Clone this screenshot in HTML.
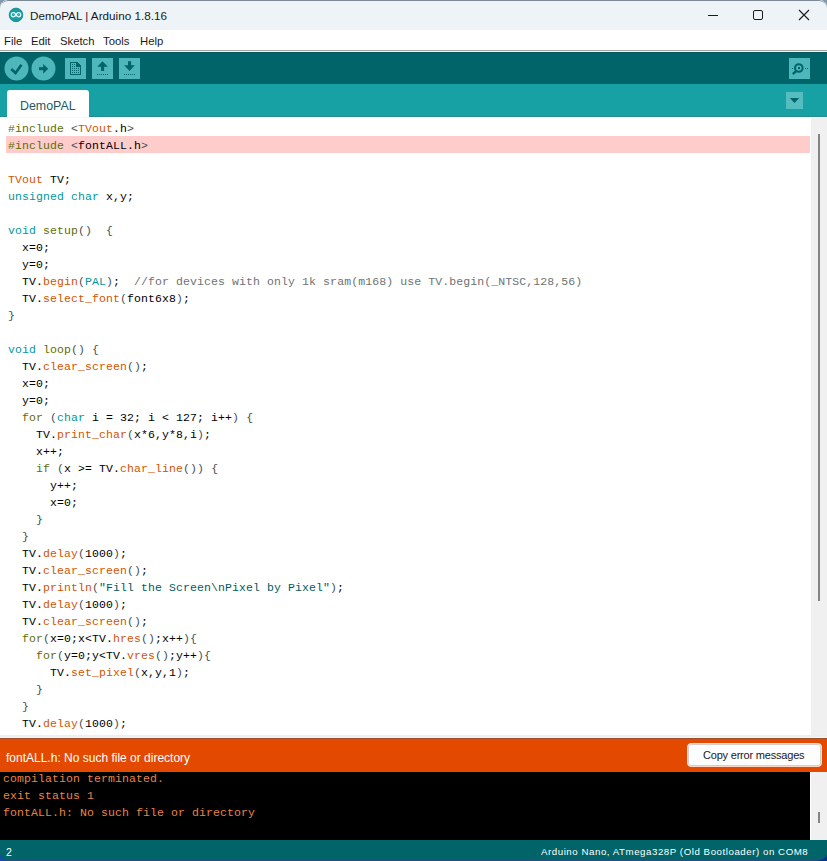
<!DOCTYPE html>
<html><head><meta charset="utf-8">
<style>
html,body{margin:0;padding:0;}
body{width:827px;height:861px;overflow:hidden;position:relative;background:#7f9aab;font-family:"Liberation Sans",sans-serif;}
.abs{position:absolute;}
#win{position:absolute;left:0;top:0;width:827px;height:861px;overflow:hidden;border-radius:8px 8px 0 0;background:#fff;}
#title{left:0;top:0;width:827px;height:30px;background:#eef3f8;}
#menu{left:0;top:30px;width:827px;height:20px;background:#fff;}
#mline{left:0;top:50px;width:827px;height:1px;background:#a9a5a5;}
#tool{left:0;top:51px;width:827px;height:33px;background:#006468;}
#tabs{left:0;top:84px;width:827px;height:33px;background:#17a1a5;}
#editor{left:0;top:117px;width:827px;height:618px;background:#fff;}
#vsb{left:811px;top:117px;width:16px;height:618px;background:#f0f0f0;}
#band{left:0;top:735px;width:827px;height:3px;background:#e8ebee;}
#status{left:0;top:738px;width:827px;height:34px;background:#e34c00;}
#console{left:0;top:772px;width:810px;height:68px;background:#000;}
#csb{left:810px;top:772px;width:17px;height:68px;background:#f0f0f0;border-left:1px solid #fff;box-sizing:border-box;}
#foot{left:0;top:840px;width:827px;height:20px;background:#006468;}
#bline{left:0;top:860px;width:827px;height:1px;background:#1f3f8f;}
pre{margin:0;font-family:"Liberation Mono",monospace;font-size:11.5px;letter-spacing:0.1px;line-height:17px;}
#code{left:8px;top:120px;color:#000;}
.hl{position:absolute;left:6px;top:136px;width:804px;height:17px;background:#ffcccc;}
.menu{top:35px;font-size:11.3px;color:#1a1a1a;white-space:pre}
.p{color:#5e6d03}.k{color:#00979c}.f{color:#d35400}.c{color:#6e7273}.s{color:#005c5f}.o{color:#434f54}.r{color:#728e00}
</style></head><body>
<div id="win">
  <div id="title" class="abs"></div>
  <svg class="abs" style="left:0;top:0" width="30" height="30" viewBox="0 0 30 30"><circle cx="16" cy="14.9" r="6.8" fill="#1a9da1" stroke="#0f8589" stroke-width="0.8"/><circle cx="13.4" cy="14.8" r="2.1" fill="none" stroke="#dffcfc" stroke-width="1.3"/><circle cx="18.6" cy="14.8" r="2.1" fill="none" stroke="#dffcfc" stroke-width="1.3"/><path d="M12.6 14.8H14.2M17.8 14.8H19.4M18.6 14V15.6" stroke="#4fb5b8" stroke-width="0.6"/></svg>
  <div class="abs" style="left:0;top:0;width:827px;height:20px;box-sizing:border-box;border-top:1px solid #7c8894;border-radius:8px 8px 0 0"></div>
  <div class="abs" style="left:30px;top:9px;font-size:11.7px;color:#1a1a1a;white-space:pre">DemoPAL | Arduino 1.8.16</div>
  <div class="abs" style="left:708px;top:15px;width:10px;height:1px;background:#1a1a1a"></div>
  <div class="abs" style="left:753px;top:10px;width:10px;height:10px;border:1px solid #1a1a1a;border-radius:2px;box-sizing:border-box"></div>
  <svg class="abs" style="left:798px;top:9px" width="12" height="12" viewBox="0 0 12 12"><path d="M1 1L11 11M11 1L1 11" stroke="#1a1a1a" stroke-width="1.1"/></svg>
  <div id="menu" class="abs"></div>
  <div class="abs menu" style="left:4px">File</div>
  <div class="abs menu" style="left:31px">Edit</div>
  <div class="abs menu" style="left:60px">Sketch</div>
  <div class="abs menu" style="left:103px">Tools</div>
  <div class="abs menu" style="left:140px">Help</div>
  <div id="mline" class="abs"></div>
  <div id="tool" class="abs"></div>
  <div class="abs" style="left:0;top:51px;width:827px;height:1px;background:#e6f8f8"></div>
  <div class="abs" style="left:0;top:52px;width:827px;height:1px;background:#03585c"></div>
  <div id="tabs" class="abs"></div>
  <svg class="abs" style="left:0;top:51px" width="827" height="66" viewBox="0 51 827 66">
    <circle cx="16.5" cy="68.5" r="12" fill="#4db7bb"/>
    <path d="M11.2 69 L15.6 73 L21.4 64.7" fill="none" stroke="#006468" stroke-width="2.6"/>
    <circle cx="43.5" cy="68.5" r="12" fill="#4db7bb"/>
    <rect x="39" y="67.2" width="5" height="3" fill="#006468"/>
    <path d="M43.2 64 L48.2 68.8 L43.2 73.8Z" fill="#006468"/>
    <rect x="65" y="58" width="21" height="21" fill="#4db7bb"/>
    <rect x="92" y="58" width="21" height="21" fill="#4db7bb"/>
    <rect x="119" y="58" width="21" height="21" fill="#4db7bb"/>
    <rect x="789" y="58" width="21" height="21" fill="#4db7bb"/>
    <rect x="786" y="92" width="17" height="17" fill="#55bcbf"/>
    <path d="M789.8 98 L799.2 98 L794.5 103Z" fill="#006468"/>
    <g fill="#006468" shape-rendering="crispEdges">
      <path d="M70 62H77L81 66V75H70Z M71 63V74H80V67H76V63Z" fill-rule="evenodd"/>
      <rect x="72" y="64" width="1" height="1"/><rect x="74" y="64" width="1" height="1"/>
      <rect x="72" y="66" width="1" height="1"/><rect x="74" y="66" width="1" height="1"/>
      <rect x="72" y="68" width="1" height="1"/><rect x="74" y="68" width="1" height="1"/><rect x="76" y="68" width="1" height="1"/><rect x="78" y="68" width="1" height="1"/>
      <rect x="72" y="70" width="1" height="1"/><rect x="74" y="70" width="1" height="1"/><rect x="76" y="70" width="1" height="1"/><rect x="78" y="70" width="1" height="1"/>
      <rect x="72" y="72" width="1" height="1"/><rect x="74" y="72" width="1" height="1"/><rect x="76" y="72" width="1" height="1"/><rect x="78" y="72" width="1" height="1"/>
      <rect x="97" y="74" width="1" height="1"/><rect x="99" y="74" width="1" height="1"/><rect x="101" y="74" width="1" height="1"/><rect x="103" y="74" width="1" height="1"/><rect x="105" y="74" width="1" height="1"/><rect x="107" y="74" width="1" height="1"/>
      <rect x="124" y="74" width="1" height="1"/><rect x="126" y="74" width="1" height="1"/><rect x="128" y="74" width="1" height="1"/><rect x="130" y="74" width="1" height="1"/><rect x="132" y="74" width="1" height="1"/><rect x="134" y="74" width="1" height="1"/>
    </g>
    <path d="M76 62L81 67H76Z" fill="#006468"/>
    <path d="M102.5 61.3L107.8 66.7H104.1V71H101.1V66.7H97.3Z" fill="#006468"/>
    <path d="M129.5 71L134.8 65.2H131.1V61.2H128V65.2H124.2Z" fill="#006468"/>
    <circle cx="798.8" cy="68" r="3.8" fill="none" stroke="#006468" stroke-width="2"/>
    <rect x="798" y="67" width="2" height="2" fill="#006468"/>
    <path d="M796.6 70.6L792.8 74.2" stroke="#006468" stroke-width="2.4"/>
    <g fill="#006468" shape-rendering="crispEdges"><rect x="792" y="68" width="1" height="1"/><rect x="805" y="68" width="1" height="1"/><rect x="807" y="68" width="1" height="1"/></g>
  </svg>
  <div class="abs" style="left:7px;top:90px;width:82px;height:27px;background:#fff;border-radius:3px 3px 0 0"></div>
  <div class="abs" style="left:20px;top:99px;font-size:12.4px;letter-spacing:0px;color:#245a5c;white-space:pre">DemoPAL</div>
  <div id="editor" class="abs"></div>
  <div class="abs" style="left:89px;top:116px;width:738px;height:1px;background:#2b8c90"></div>
  <div class="abs" style="left:0;top:116px;width:7px;height:1px;background:#2b8c90"></div>
  <div class="abs" style="left:0;top:117px;width:827px;height:1px;background:#e9fdfd"></div>
  <div class="hl"></div>
  <div id="vsb" class="abs"></div>
  <pre id="code" class="abs"><span class="p">#include</span> <span class="o">&lt;</span><span class="f">TVout</span>.h<span class="o">&gt;</span>
<span class="p">#include</span> <span class="o">&lt;</span>fontALL.h<span class="o">&gt;</span>

<span class="f">TVout</span> TV;
<span class="k">unsigned</span> <span class="k">char</span> x,y;

<span class="k">void</span> <span class="p">setup</span><span class="o">()</span>  <span class="o">{</span>
  x=0;
  y=0;
  TV.<span class="f">begin</span><span class="o">(</span><span class="k">PAL</span><span class="o">)</span>;  <span class="c">//for devices with only 1k sram(m168) use TV.begin(_NTSC,128,56)</span>
  TV.<span class="f">select_font</span><span class="o">(</span>font6x8<span class="o">)</span>;
<span class="o">}</span>

<span class="k">void</span> <span class="p">loop</span><span class="o">()</span> <span class="o">{</span>
  TV.<span class="f">clear_screen</span><span class="o">()</span>;
  x=0;
  y=0;
  <span class="p">for</span> <span class="o">(</span><span class="k">char</span> i = 32; i &lt; 127; i++<span class="o">)</span> <span class="o">{</span>
    TV.<span class="f">print_char</span><span class="o">(</span>x*6,y*8,i<span class="o">)</span>;
    x++;
    <span class="p">if</span> <span class="o">(</span>x &gt;= TV.<span class="f">char_line</span><span class="o">())</span> <span class="o">{</span>
      y++;
      x=0;
    <span class="o">}</span>
  <span class="o">}</span>
  TV.<span class="f">delay</span><span class="o">(</span>1000<span class="o">)</span>;
  TV.<span class="f">clear_screen</span><span class="o">()</span>;
  TV.<span class="f">println</span><span class="o">(</span><span class="s">"Fill the Screen\nPixel by Pixel"</span><span class="o">)</span>;
  TV.<span class="f">delay</span><span class="o">(</span>1000<span class="o">)</span>;
  TV.<span class="f">clear_screen</span><span class="o">()</span>;
  <span class="p">for</span><span class="o">(</span>x=0;x&lt;TV.<span class="f">hres</span><span class="o">()</span>;x++<span class="o">){</span>
    <span class="p">for</span><span class="o">(</span>y=0;y&lt;TV.<span class="f">vres</span><span class="o">()</span>;y++<span class="o">){</span>
      TV.<span class="f">set_pixel</span><span class="o">(</span>x,y,1<span class="o">)</span>;
    <span class="o">}</span>
  <span class="o">}</span>
  TV.<span class="f">delay</span><span class="o">(</span>1000<span class="o">)</span>;</pre>
  <div class="abs" style="left:818px;top:134px;width:2px;height:467px;background:#858585"></div>
  <div class="abs" style="left:0;top:735px;width:827px;height:2px;background:#edeef0"></div>
  <div class="abs" style="left:0;top:737px;width:827px;height:1px;background:#fff6f2"></div>
  <div class="abs" style="left:0;top:738px;width:827px;height:1px;background:#9b4d2a"></div>
  <div class="abs" style="left:0;top:739px;width:827px;height:1px;background:#c5561e"></div>
  <div class="abs" style="left:0;top:740px;width:827px;height:32px;background:#e34a00"></div>
  <div class="abs" style="left:6px;top:751px;font-size:12px;color:#fff;white-space:pre">fontALL.h: No such file or directory</div>
  <div class="abs" style="left:687px;top:743px;width:135px;height:24px;box-sizing:border-box;border:1px solid #f7d9c8;border-radius:4px;background:#fdfdfd"><div style="position:absolute;left:0;top:0;right:0;bottom:0;border:1px solid #cfcfcf;border-radius:3px"></div></div>
  <div class="abs" style="left:703px;top:749px;font-size:11px;letter-spacing:-0.2px;color:#1a1a1a;white-space:pre">Copy error messages</div>
  <div class="abs" style="left:0;top:772px;width:810px;height:68px;background:#000"></div>
  <pre class="abs" style="left:3px;top:770px;color:#e98448">compilation terminated.
exit status 1
fontALL.h: No such file or directory</pre>
  <div class="abs" style="left:810px;top:772px;width:17px;height:68px;background:#f0f0f0;border-left:1px solid #fff;box-sizing:border-box"></div>
  <div class="abs" style="left:818px;top:812px;width:2px;height:11px;background:#858585"></div>
  <div class="abs" style="left:0;top:840px;width:827px;height:20px;background:#006468"></div>
  <div class="abs" style="left:6px;top:846px;font-size:10.5px;color:#fff;white-space:pre">2</div>
  <div class="abs" style="left:541px;top:846px;font-size:9.7px;letter-spacing:0.55px;color:#fff;white-space:pre">Arduino Nano, ATmega328P (Old Bootloader) on COM8</div>
  <div class="abs" style="left:0;top:860px;width:827px;height:1px;background:#2a4d86"></div>
  <svg class="abs" style="left:0;top:851px" width="827" height="10" viewBox="0 851 827 10"><path d="M0 853 Q1 859 7 861 H0Z" fill="#1848b0" opacity="0.8"/><path d="M827 855 Q825 860 815 861 H827Z" fill="#0c2a96" opacity="0.85"/></svg>
</div>
</body></html>
